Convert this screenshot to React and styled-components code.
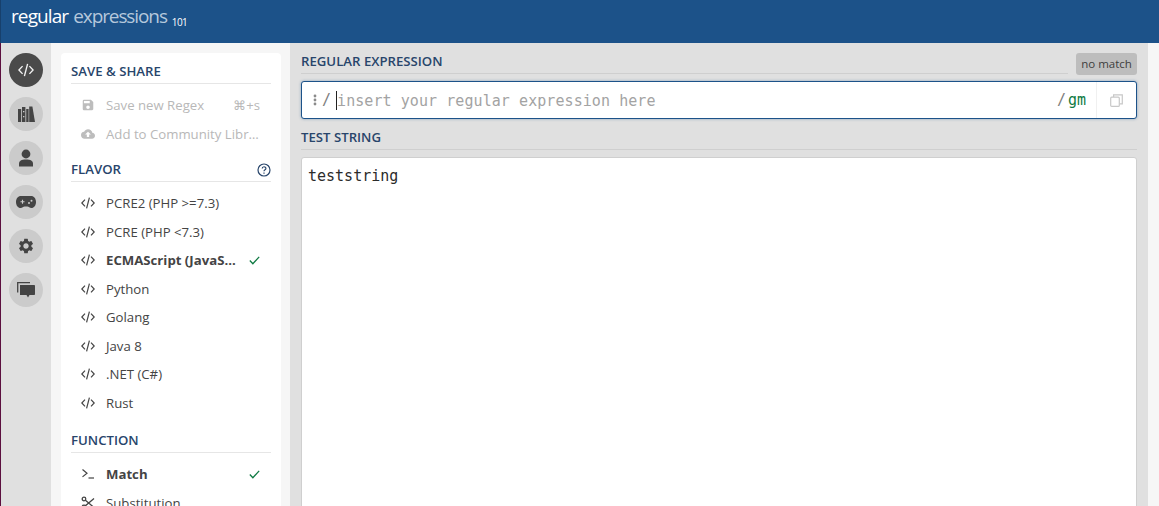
import React from "react";
import styled, { createGlobalStyle } from "styled-components";
import { MdSave, MdCloudUpload, MdSettings } from "react-icons/md";

const GlobalStyle = createGlobalStyle`
  html, body { margin: 0; padding: 0; height: 100%; overflow: hidden; }
  body { font-family: "Open Sans", "Liberation Sans", sans-serif; background: #e0e0e0; }
  * { box-sizing: border-box; }
`;

const CodeIcon = ({ size = 14 }) => (
  <svg width={size} height={size} viewBox="0 0 14 14" fill="none" stroke="currentColor" strokeWidth="1.2">
    <path d="M4 3.6 L0.8 7 L4 10.4" />
    <path d="M10 3.6 L13.2 7 L10 10.4" />
    <path d="M8.4 1.6 L5.6 12.4" />
  </svg>
);

const BooksIcon = () => (
  <svg width="17" height="16" viewBox="0 0 17 16" fill="currentColor">
    <path d="M0 3h3.2v13H0z" />
    <path d="M4 1h3.4v15H4zM5 5v1.2h1.4V5zM5 10v1.2h1.4V10z" fillRule="evenodd" />
    <path d="M8.2 3h2.4v13H8.2z" />
    <path d="M11.2 0.6h3.2L17 16h-5.8z" />
  </svg>
);

const PersonIcon = () => (
  <svg width="16" height="18" viewBox="0 0 16 18" fill="currentColor">
    <circle cx="8" cy="5" r="4.4" />
    <path d="M1 17.5v-2.7C1 12 3.4 10.6 8 10.6s7 1.4 7 4.2v2.7z" />
  </svg>
);

const GamepadIcon = () => (
  <svg width="20" height="14" viewBox="0 0 20 14">
    <path d="M5 1h10c3 0 5 2.6 5 6s-2 6-4.6 6c-1.8 0-2.6-1.6-4-1.6H8.6c-1.4 0-2.2 1.6-4 1.6C2 13 0 10.4 0 7s2-6 5-6z" fill="currentColor" />
    <path d="M4.5 6.8h4M6.5 4.8v4" stroke="#cbcbcb" strokeWidth="1.1" fill="none" />
    <circle cx="13" cy="8" r="1" fill="#cbcbcb" />
    <circle cx="15.5" cy="5.8" r="1" fill="#cbcbcb" />
  </svg>
);

const ForumIcon = () => (
  <svg width="18" height="17" viewBox="0 0 18 17">
    <path d="M0.7 10.5V0.7H13" fill="none" stroke="currentColor" strokeWidth="1.3" />
    <path d="M3 3h14.2a.8.8 0 0 1 .8.8v8.4a.8.8 0 0 1-.8.8H12.5l-1.5 2.5L9.5 13H3z" fill="currentColor" />
  </svg>
);

const CheckIcon = () => (
  <svg width="11" height="9" viewBox="0 0 12 10" fill="none" stroke="#0f7a43" strokeWidth="1.4">
    <path d="M0.8 5 L4.2 8.6 L11.2 0.9" />
  </svg>
);

const HelpIcon = () => (
  <svg width="14" height="14" viewBox="0 0 14 14" fill="none" stroke="#28456b" strokeWidth="1.2">
    <circle cx="7" cy="7" r="6" />
    <path d="M5.2 5.6c0-2.4 3.7-2.4 3.7-.2 0 1.3-1.9 1.4-1.9 2.9" />
    <path d="M7 9.4v1.3" />
  </svg>
);

const TerminalIcon = () => (
  <svg width="14" height="14" viewBox="0 0 14 14" fill="none" stroke="currentColor" strokeWidth="1.2">
    <path d="M1.5 2.5 L6 6.2 L1.5 9.9" />
    <path d="M7.5 11 H13" />
  </svg>
);

const ScissorsIcon = () => (
  <svg width="14" height="14" viewBox="0 0 14 14" fill="none" stroke="currentColor" strokeWidth="1.3">
    <circle cx="3" cy="3" r="1.8" />
    <circle cx="3" cy="11" r="1.8" />
    <path d="M4.4 4.2 L13 11.5 M4.4 9.8 L13 2.5" />
  </svg>
);

const GripIcon = () => (
  <svg width="4" height="12" viewBox="0 0 4 12" fill="#8a8a8a">
    <circle cx="2" cy="2" r="1.4" />
    <circle cx="2" cy="6" r="1.4" />
    <circle cx="2" cy="10" r="1.4" />
  </svg>
);

const CopyIcon = () => (
  <svg width="13" height="13" viewBox="0 0 13 13" fill="none" stroke="#c8c8c8" strokeWidth="1.2">
    <rect x="0.7" y="3.2" width="8.6" height="9.2" rx="1" />
    <path d="M3.6 3V0.8H12.3V9.8H9.6" />
  </svg>
);

const Page = styled.div`
  height: 100vh;
  display: flex;
  flex-direction: column;
  overflow: hidden;
`;

const Header = styled.header`
  height: 43px;
  flex: none;
  background: #1c5289;
  border-left: 1px solid #17406c;
  padding: 2px 0 0 10px;
  display: flex;
  align-items: baseline;
  line-height: 29px;
`;

const LogoStrong = styled.span`
  color: #fff;
  font-size: 19px;
  letter-spacing: -0.9px;
`;

const LogoLight = styled.span`
  color: #b5c8dc;
  font-size: 19px;
  letter-spacing: -1.1px;
  margin-left: 5px;
`;

const LogoVersion = styled.span`
  color: #fff;
  font-size: 10px;
  letter-spacing: -0.6px;
  margin-left: 5px;
  transform: translateY(3px);
`;

const Body = styled.div`
  flex: 1;
  min-height: 0;
  display: flex;
  border-left: 1px solid #5c0f3f;
`;

const Rail = styled.nav`
  width: 50px;
  flex: none;
  background: #e0e0e0;
  padding: 10px 0 0 8px;
  display: flex;
  flex-direction: column;
  gap: 10px;
`;

const RailButton = styled.div`
  width: 34px;
  height: 34px;
  border-radius: 50%;
  display: flex;
  align-items: center;
  justify-content: center;
  background: ${(p) => (p.$active ? "#4a4a4a" : "#cbcbcb")};
  color: ${(p) => (p.$active ? "#f2f2f2" : "#444")};
`;

const Side = styled.aside`
  width: 239px;
  flex: none;
  background: #f6f6f6;
  padding: 10px 9px 0 10px;
  overflow: hidden;
`;

const Card = styled.div`
  background: #fff;
  border-radius: 4px 4px 0 0;
  padding: 10px 10px 0;
  height: 600px;
`;

const SectionTitle = styled.div`
  display: flex;
  justify-content: space-between;
  align-items: center;
  height: 21px;
  margin-top: ${(p) => p.$top || 0}px;
  padding-bottom: 3px;
  border-bottom: 1px solid #e6e6e6;
  color: #28456b;
  font-size: 13.2px;
  font-weight: 600;
  line-height: 17px;
`;

const List = styled.ul`
  list-style: none;
  margin: 7px 0 0;
  padding: 0;
`;

const Item = styled.li`
  height: 28.5px;
  display: flex;
  align-items: center;
  padding: 0 11px 0 10px;
  font-size: 13.2px;
  white-space: nowrap;
  color: ${(p) => (p.$muted ? "#b8b8b8" : "#444")};
  font-weight: ${(p) => (p.$selected ? 700 : 400)};
`;

const ItemIcon = styled.span`
  width: 25px;
  flex: none;
  display: flex;
  align-items: center;
  color: ${(p) => (p.$muted ? "#bdbdbd" : "#444")};
`;

const ItemLabel = styled.span`
  flex: 1;
  min-width: 0;
`;

const ItemAside = styled.span`
  flex: none;
  margin-left: 8px;
  display: flex;
  align-items: center;
`;

const Main = styled.main`
  width: 858px;
  flex: none;
  background: #e0e0e0;
  padding: 10px 11px 0;
  overflow: hidden;
`;

const LabelRow = styled.div`
  display: flex;
  align-items: flex-start;
  gap: 8px;
  height: 28px;
`;

const Label = styled.div`
  flex: 1;
  height: 21px;
  border-bottom: 1px solid #cfcfcf;
  color: #28456b;
  font-size: 13.2px;
  font-weight: 600;
  line-height: 17px;
`;

const Badge = styled.div`
  width: 61px;
  height: 22px;
  background: #bdbdbd;
  border-radius: 3px;
  color: #3d3d3d;
  font-size: 11.5px;
  line-height: 22px;
  text-align: center;
`;

const RegexBox = styled.div`
  height: 38px;
  background: #fff;
  border: 1px solid #1c5289;
  border-radius: 3px;
  box-shadow: 0 0 3px rgba(28, 82, 137, 0.45);
  display: flex;
  align-items: center;
  font-family: "DejaVu Sans Mono", "Liberation Mono", monospace;
  font-size: 15px;
  margin-bottom: 10px;
`;

const Grip = styled.span`
  margin-left: 11px;
  display: flex;
`;

const Slash = styled.span`
  color: #7d7d7d;
  margin-left: ${(p) => p.$left}px;
`;

const Placeholder = styled.span`
  flex: 1;
  margin-left: 5px;
  border-left: 1px solid #222;
  height: 19px;
  line-height: 20px;
  color: #a3a3a3;
  letter-spacing: 0.07px;
`;

const Flags = styled.span`
  color: #0f7a43;
  margin-left: 2px;
  width: 28px;
`;

const CopyButton = styled.span`
  width: 40px;
  height: 100%;
  border-left: 1px solid #f0f0f0;
  display: flex;
  align-items: center;
  justify-content: center;
  padding-right: 1px;
`;

const Editor = styled.div`
  height: 500px;
  background: #fff;
  border: 1px solid #cfcfcf;
  border-radius: 3px;
  padding: 9px 6px;
  font-family: "DejaVu Sans Mono", "Liberation Mono", monospace;
  font-size: 15px;
  line-height: 19px;
  color: #2b2b2b;
`;

const Gutter = styled.div`
  flex: 1;
  background: #f6f6f6;
`;

const flavors = ["PCRE2 (PHP >=7.3)", "PCRE (PHP <7.3)", "ECMAScript (JavaS…", "Python", "Golang", "Java 8", ".NET (C#)", "Rust"];

const App = () => {
  return (
    <Page>
      <GlobalStyle />
      <Header>
        <LogoStrong>regular</LogoStrong>
        <LogoLight>expressions</LogoLight>
        <LogoVersion>101</LogoVersion>
      </Header>
      <Body>
        <Rail>
          <RailButton $active><CodeIcon size={16} /></RailButton>
          <RailButton><BooksIcon /></RailButton>
          <RailButton><PersonIcon /></RailButton>
          <RailButton><GamepadIcon /></RailButton>
          <RailButton><MdSettings size={18} /></RailButton>
          <RailButton><ForumIcon /></RailButton>
        </Rail>
        <Side>
          <Card>
            <SectionTitle>SAVE &amp; SHARE</SectionTitle>
            <List>
              <Item $muted>
                <ItemIcon $muted><MdSave size={14} /></ItemIcon>
                <ItemLabel>Save new Regex</ItemLabel>
                <ItemAside>⌘+s</ItemAside>
              </Item>
              <Item $muted>
                <ItemIcon $muted><MdCloudUpload size={14} /></ItemIcon>
                <ItemLabel>Add to Community Libr…</ItemLabel>
              </Item>
            </List>
            <SectionTitle $top={13}>
              FLAVOR
              <HelpIcon />
            </SectionTitle>
            <List>
              {flavors.map((name, i) => (
                <Item key={name} $selected={i === 2}>
                  <ItemIcon><CodeIcon /></ItemIcon>
                  <ItemLabel>{name}</ItemLabel>
                  {i === 2 && <ItemAside><CheckIcon /></ItemAside>}
                </Item>
              ))}
            </List>
            <SectionTitle $top={15}>FUNCTION</SectionTitle>
            <List>
              <Item $selected>
                <ItemIcon><TerminalIcon /></ItemIcon>
                <ItemLabel>Match</ItemLabel>
                <ItemAside><CheckIcon /></ItemAside>
              </Item>
              <Item>
                <ItemIcon><ScissorsIcon /></ItemIcon>
                <ItemLabel>Substitution</ItemLabel>
              </Item>
            </List>
          </Card>
        </Side>
        <Main>
          <LabelRow>
            <Label>REGULAR EXPRESSION</Label>
            <Badge>no match</Badge>
          </LabelRow>
          <RegexBox>
            <Grip><GripIcon /></Grip>
            <Slash $left={5}>/</Slash>
            <Placeholder>insert your regular expression here</Placeholder>
            <Slash $left={0}>/</Slash>
            <Flags>gm</Flags>
            <CopyButton><CopyIcon /></CopyButton>
          </RegexBox>
          <LabelRow>
            <Label>TEST STRING</Label>
          </LabelRow>
          <Editor>teststring</Editor>
        </Main>
        <Gutter />
      </Body>
    </Page>
  );
};

export default App;
